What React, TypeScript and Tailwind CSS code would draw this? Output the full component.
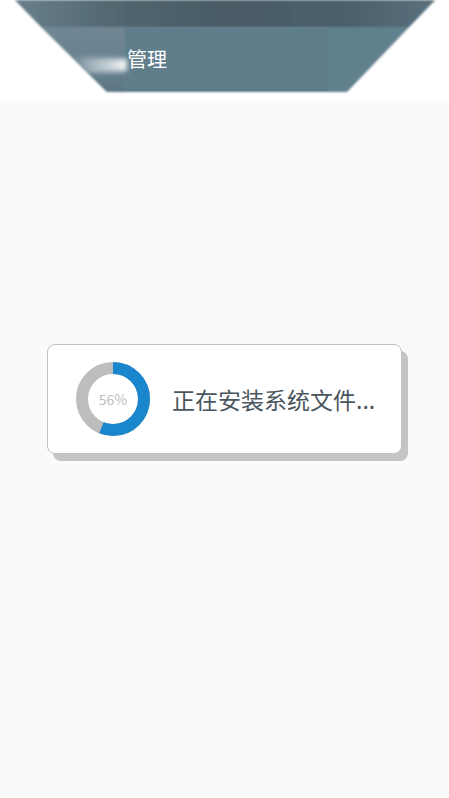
import React from "react";

const font = { fontFamily: '"Noto Sans CJK SC", "Noto Sans", sans-serif' };

function HeaderArt() {
  return (
    <svg className="absolute inset-0" width="449" height="100" viewBox="0 0 449 100">
      <defs>
        <filter id="soft" x="-10%" y="-10%" width="120%" height="120%">
          <feGaussianBlur stdDeviation="1.2" />
        </filter>
        <filter id="haze" x="-20%" y="-50%" width="140%" height="200%">
          <feGaussianBlur stdDeviation="2.5" />
        </filter>
        <linearGradient id="band" x1="0" y1="0" x2="1" y2="0">
          <stop offset="0" stopColor="#687f8d" />
          <stop offset="0.25" stopColor="#51666f" />
          <stop offset="0.5" stopColor="#485b66" />
          <stop offset="0.8" stopColor="#4c606c" />
          <stop offset="1" stopColor="#5a717e" />
        </linearGradient>
        <linearGradient id="leftSide" x1="0" y1="0" x2="0" y2="1">
          <stop offset="0" stopColor="#6f8694" />
          <stop offset="0.6" stopColor="#6a8391" />
          <stop offset="1" stopColor="#5a7583" />
        </linearGradient>
        <linearGradient id="glare" x1="0" y1="0" x2="1" y2="0">
          <stop offset="0" stopColor="#ffffff" stopOpacity="0" />
          <stop offset="0.55" stopColor="#d9e1e6" stopOpacity="0.7" />
          <stop offset="1" stopColor="#ffffff" stopOpacity="0.95" />
        </linearGradient>
      </defs>
      <g filter="url(#soft)">
        <polygon points="15,0 435,0 347,92 107,92" fill="#61808e" />
        <polygon points="15,0 435,0 409,27 41,27" fill="url(#band)" />
        <polygon points="41,27 125,27 125,92 107,92" fill="url(#leftSide)" />
      </g>
      <rect x="125" y="27" width="203" height="64" fill="#607d8b" />
      <polygon points="72,57 127,59 127,71 88,73" fill="url(#glare)" filter="url(#haze)" />
    </svg>
  );
}

function Ring({ value }: { value: number }) {
  const r = 31;
  const c = 2 * Math.PI * r;
  return (
    <div className="relative w-[76px] h-[76px] shrink-0">
      <svg width="76" height="76" viewBox="0 0 76 76" className="-rotate-90">
        <circle cx="38" cy="38" r={r} fill="none" stroke="#bdbdbd" strokeWidth="12" />
        <circle
          cx="38"
          cy="38"
          r={r}
          fill="none"
          stroke="#1a86cc"
          strokeWidth="12"
          strokeDasharray={`${(c * value) / 100} ${c}`}
        />
      </svg>
      <span className="absolute inset-0 flex items-center justify-center text-[14px] text-[#bdbdbd]">
        {value}%
      </span>
    </div>
  );
}

export default function App() {
  return (
    <div className="min-h-screen flex flex-col bg-[#fafafa]" style={font}>
      <div className="relative h-[100px] bg-white">
        <HeaderArt />
        <h1 className="relative pl-[127px] pt-[45px] text-[20px] leading-[28px] text-white">管理</h1>
      </div>

      <div className="flex-1 flex items-center justify-center pb-[100px]">
        <div className="w-[355px] h-[110px] flex items-center gap-[21px] pl-[27px] bg-white border border-[#c2c2c2] rounded-[8px] shadow-[6px_7px_0_#c4c4c4]">
          <Ring value={56} />
          <p className="text-[23px] leading-none text-[#4a565e]">正在安装系统文件...</p>
        </div>
      </div>
    </div>
  );
}
